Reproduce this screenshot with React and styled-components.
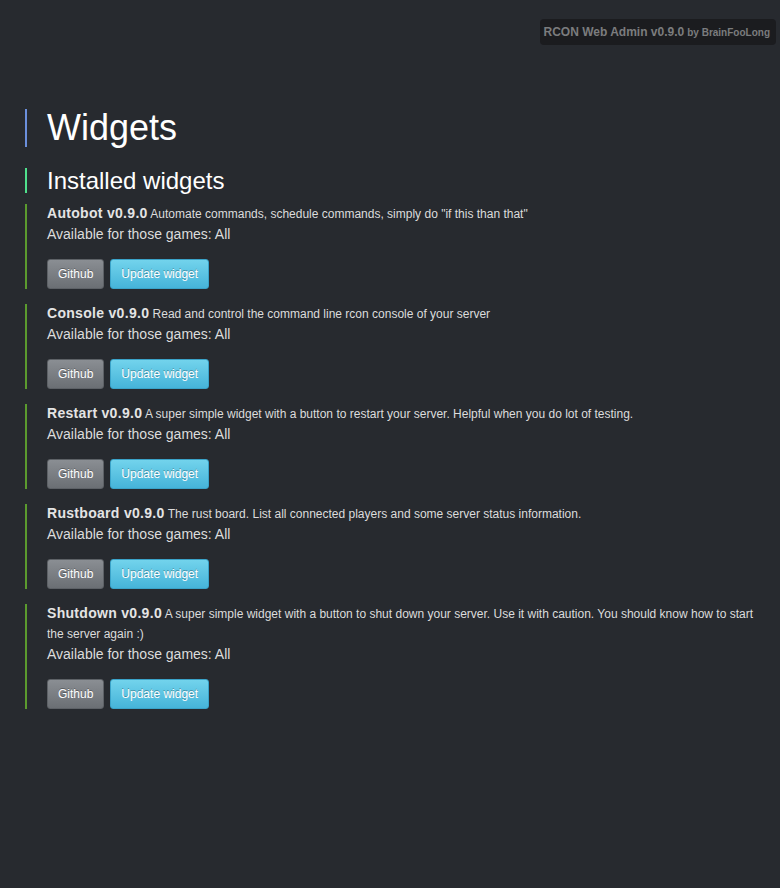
import React from 'react';
import styled, { createGlobalStyle } from 'styled-components';

const GlobalStyle = createGlobalStyle`
  html, body {
    margin: 0;
    padding: 0;
    background: #272a2f;
  }
  body {
    font-family: "Liberation Sans", Arial, sans-serif;
    color: #e6e6e6;
  }
`;

const Page = styled.div`
  min-height: 888px;
  background: #272a2f;
  padding: 19px 4px 0 25px;
  box-sizing: border-box;
`;

const TopBar = styled.div`
  display: flex;
  justify-content: flex-end;
`;

const Badge = styled.div`
  background: #1b1c1f;
  border-radius: 4px;
  height: 26px;
  padding: 0 6px 0 4px;
  display: flex;
  align-items: center;
  gap: 3px;
  color: #7b7c7e;
  font-size: 12px;
  font-weight: bold;
  b {
    font-size: 12px;
  }
  small {
    font-size: 10px;
  }
`;

const Title = styled.h1`
  margin: 64px 0 0;
  border-left: 2px solid ${p => p.color};
  padding-left: 20px;
  font-weight: normal;
  color: #fff;
  font-size: ${p => p.size}px;
  line-height: ${p => p.lh}px;
`;

const SubTitle = styled(Title).attrs({ as: 'h2' })`
  margin-top: 21px;
`;

const List = styled.div`
  display: flex;
  flex-direction: column;
  gap: 15px;
  margin-top: 11px;
  padding-right: 10px;
`;

const Item = styled.div`
  border-left: 2px solid #5b9a2e;
  padding-left: 20px;
`;

const Head = styled.div`
  font-size: 12px;
  line-height: 20px;
  color: #dcdcdc;
  strong {
    font-size: 14px;
    line-height: 1;
    letter-spacing: 0.3px;
    color: #e4e4e4;
  }
`;

const Games = styled.div`
  font-size: 14px;
  line-height: 20px;
  color: #dcdcdc;
`;

const Buttons = styled.div`
  display: flex;
  gap: 6px;
  margin-top: 15px;
`;

const Button = styled.button`
  font-family: "Liberation Sans", Arial, sans-serif;
  font-size: 12px;
  color: #fff;
  text-shadow: 0 -1px 0 rgba(0, 0, 0, 0.3);
  height: 30px;
  padding: 0 10px;
  border-radius: 3px;
  cursor: pointer;
  border: 1px solid ${p => (p.info ? '#3aa3c9' : '#5d6166')};
  background: ${p =>
    p.info
      ? 'linear-gradient(#72d3ec, #46b4d9)'
      : 'linear-gradient(#8a8e93, #6b6f74)'};
`;

const widgets = [
  { name: 'Autobot', desc: 'Automate commands, schedule commands, simply do "if this than that"' },
  { name: 'Console', desc: 'Read and control the command line rcon console of your server' },
  { name: 'Restart', desc: 'A super simple widget with a button to restart your server. Helpful when you do lot of testing.' },
  { name: 'Rustboard', desc: 'The rust board. List all connected players and some server status information.' },
  { name: 'Shutdown', desc: 'A super simple widget with a button to shut down your server. Use it with caution. You should know how to start the server again :)' },
];

const App = () => {
  return (
    <Page>
      <GlobalStyle />
      <TopBar>
        <Badge>
          <b>RCON Web Admin v0.9.0</b>
          <small>by BrainFooLong</small>
        </Badge>
      </TopBar>
      <Title color="#6b8fdc" size={36} lh={38}>Widgets</Title>
      <SubTitle color="#4fe08c" size={24} lh={25}>Installed widgets</SubTitle>
      <List>
        {widgets.map(w => (
          <Item key={w.name}>
            <Head>
              <strong>{w.name} v0.9.0</strong> {w.desc}
            </Head>
            <Games>Available for those games: All</Games>
            <Buttons>
              <Button>Github</Button>
              <Button info>Update widget</Button>
            </Buttons>
          </Item>
        ))}
      </List>
    </Page>
  );
};

export default App;
